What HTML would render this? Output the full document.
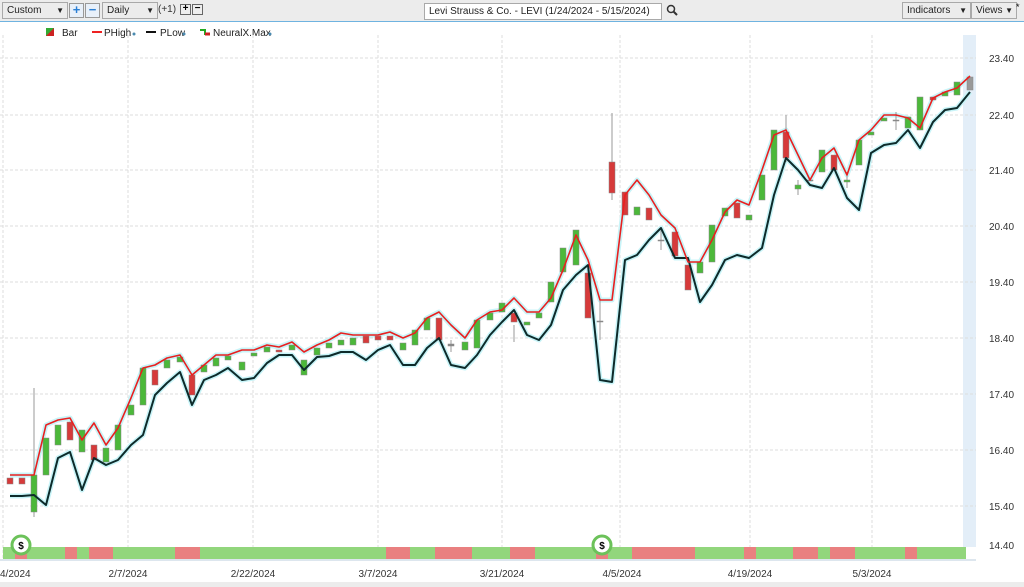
<!DOCTYPE html>
<html><head><meta charset="utf-8"><style>
body{margin:0;width:1024px;height:587px;overflow:hidden;background:#fff;font-family:"Liberation Sans",sans-serif;}
.tb{position:absolute;left:0;top:0;width:1024px;height:21px;background:#ececec;border-bottom:1px solid #6fb3e0;}
.sel{position:absolute;top:2px;height:15px;border:1px solid #a9a9a9;background:#ececec;font-size:10px;line-height:15px;padding-left:4px;box-sizing:content-box;color:#222;white-space:nowrap;overflow:hidden}
.sel b{position:absolute;right:3px;top:0;font-size:8px;}
.btn{position:absolute;top:3px;width:13px;height:13px;border:1px solid #999;background:#e8f0fa;font-size:13px;line-height:12px;text-align:center;color:#2a7fd4;font-weight:bold}
.sb{position:absolute;top:4px;width:9px;height:9px;border:1px solid #666;background:#eee;font-size:10px;line-height:8px;text-align:center;font-weight:bold}
</style></head><body>
<div class="tb">
<div class="sel" style="left:2px;width:60px">Custom<b>▼</b></div>
<div class="btn" style="left:69px">+</div>
<div class="btn" style="left:85px">−</div>
<div class="sel" style="left:102px;width:50px">Daily<b>▼</b></div>
<div style="position:absolute;left:158px;top:4px;font-size:10px;color:#333">(+1)</div>
<div class="sb" style="left:180px">+</div>
<div class="sb" style="left:192px">−</div>
<div class="sel" style="left:424px;width:232px;background:#fff;top:3px;color:#222">Levi Strauss &amp; Co. - LEVI (1/24/2024 - 5/15/2024)</div>
<svg style="position:absolute;left:666px;top:4px" width="12" height="12"><circle cx="5" cy="5" r="3.5" fill="none" stroke="#333" stroke-width="1.5"/><line x1="7.5" y1="7.5" x2="11" y2="11" stroke="#333" stroke-width="2"/></svg>
<div class="sel" style="left:902px;width:63px">Indicators<b>▼</b></div>
<div class="sel" style="left:971px;width:40px">Views<b>▼</b></div>
<div style="position:absolute;left:1016px;top:2px;font-size:9px">*</div>
</div>
<svg width="1024" height="587" style="position:absolute;left:0;top:0" xmlns="http://www.w3.org/2000/svg" font-family="Liberation Sans, sans-serif">
<g font-size="10" fill="#222">
<rect x="46" y="28" width="8" height="8" fill="#c22"/><polygon points="46,28 54,28 46,36" fill="#3a3"/>
<text x="62" y="36">Bar</text>
<line x1="92" y1="32" x2="102" y2="32" stroke="#e22" stroke-width="2"/><text x="104" y="36">PHigh</text><circle cx="134" cy="34" r="1.5" fill="#4a8ab0"/>
<line x1="146" y1="32" x2="156" y2="32" stroke="#111" stroke-width="2"/><text x="160" y="36">PLow</text><circle cx="184" cy="34" r="1.5" fill="#4a8ab0"/>
<polyline points="200,30 205,30 205,34 210,34" stroke="#2a2" stroke-width="2" fill="none"/><line x1="205" y1="34" x2="210" y2="34" stroke="#c22" stroke-width="3"/>
<text x="213" y="36">NeuralX.Max</text><circle cx="270" cy="34" r="1.5" fill="#4a8ab0"/>
</g>
<rect x="963" y="35" width="13" height="512" fill="#e3eef8"/>
<g stroke="#ddd" stroke-dasharray="3,2" stroke-width="1">
<line x1="0" y1="58" x2="976" y2="58"/><line x1="0" y1="115" x2="976" y2="115"/><line x1="0" y1="170" x2="976" y2="170"/><line x1="0" y1="226" x2="976" y2="226"/><line x1="0" y1="282" x2="976" y2="282"/><line x1="0" y1="338" x2="976" y2="338"/><line x1="0" y1="394" x2="976" y2="394"/><line x1="0" y1="450" x2="976" y2="450"/><line x1="0" y1="506" x2="976" y2="506"/>
<line x1="3" y1="35" x2="3" y2="560"/><line x1="128" y1="35" x2="128" y2="560"/><line x1="253" y1="35" x2="253" y2="560"/><line x1="378" y1="35" x2="378" y2="560"/><line x1="502" y1="35" x2="502" y2="560"/><line x1="620" y1="35" x2="620" y2="560"/><line x1="750" y1="35" x2="750" y2="560"/><line x1="872" y1="35" x2="872" y2="560"/>
</g>
<g font-size="10" fill="#333">
<text x="989" y="62">23.40</text><text x="989" y="119">22.40</text><text x="989" y="174">21.40</text><text x="989" y="230">20.40</text><text x="989" y="286">19.40</text><text x="989" y="342">18.40</text><text x="989" y="398">17.40</text><text x="989" y="454">16.40</text><text x="989" y="510">15.40</text><text x="989" y="549">14.40</text>
</g>
<rect x="3" y="547" width="963" height="12" fill="#92d67c"/>
<g fill="#e98080">
<rect x="15" y="547" width="12" height="12"/><rect x="65" y="547" width="12" height="12"/><rect x="89" y="547" width="24" height="12"/><rect x="175" y="547" width="25" height="12"/><rect x="386" y="547" width="24" height="12"/><rect x="435" y="547" width="37" height="12"/><rect x="510" y="547" width="25" height="12"/><rect x="596" y="547" width="12" height="12"/><rect x="632" y="547" width="63" height="12"/><rect x="744" y="547" width="12" height="12"/><rect x="793" y="547" width="25" height="12"/><rect x="830" y="547" width="25" height="12"/><rect x="905" y="547" width="12" height="12"/>
</g>
<g><circle cx="21" cy="545" r="9" fill="#fff" stroke="#6cc25a" stroke-width="3"/><text x="21" y="549" font-size="10" text-anchor="middle" font-weight="bold">$</text>
<circle cx="602" cy="545" r="9" fill="#fff" stroke="#6cc25a" stroke-width="3"/><text x="602" y="549" font-size="10" text-anchor="middle" font-weight="bold">$</text></g>
<line x1="0" y1="560" x2="976" y2="560" stroke="#bcd" stroke-width="1"/>
<g font-size="10" fill="#333">
<text x="0" y="577">4/2024</text><text x="128" y="577" text-anchor="middle">2/7/2024</text><text x="253" y="577" text-anchor="middle">2/22/2024</text><text x="378" y="577" text-anchor="middle">3/7/2024</text><text x="502" y="577" text-anchor="middle">3/21/2024</text><text x="622" y="577" text-anchor="middle">4/5/2024</text><text x="750" y="577" text-anchor="middle">4/19/2024</text><text x="872" y="577" text-anchor="middle">5/3/2024</text>
</g>
<rect x="0" y="582" width="1024" height="5" fill="#ececec"/>
<g fill="none" stroke-linejoin="round">
<polyline stroke="#c8f4f8" stroke-width="5" points="10,496 22,496 34,495 46,505 58,458 70,452 82,490 94,458 106,465 118,460 131,445 143,435 155,395 167,383 180,372 192,405 204,380 216,375 228,368 242,380 254,378 267,363 279,355 292,355 304,370 317,357 329,356 341,352 353,352 366,360 378,350 390,345 403,365 415,365 427,348 439,338 451,365 465,368 477,355 490,335 502,322 514,310 527,335 539,340 551,325 563,290 576,275 588,265 600,380 612,382 625,260 637,255 649,240 661,228 675,258 688,258 700,302 712,285 725,260 737,255 749,258 762,248 774,195 786,158 798,170 810,185 822,188 834,168 847,198 859,210 871,153 884,145 896,143 908,130 920,148 933,122 945,110 957,108 970,92"/>
<polyline stroke="#c8f4f8" stroke-width="5" points="10,475 22,475 34,475 46,425 58,420 70,418 82,440 94,423 106,445 118,428 131,398 143,368 155,365 167,358 180,355 192,375 204,365 216,355 228,355 242,350 254,350 267,345 279,347 292,342 304,352 317,345 329,340 341,333 353,335 366,335 378,335 390,332 403,338 415,333 427,318 439,312 451,325 465,338 477,320 490,312 502,310 514,298 527,312 539,312 551,298 563,270 576,235 588,260 600,300 612,300 625,195 637,180 649,195 661,215 675,228 688,262 700,262 712,240 725,212 737,200 749,205 762,170 774,135 786,130 798,155 810,180 822,158 834,148 847,175 859,140 871,130 884,115 896,115 908,118 920,128 933,98 945,92 957,88 970,76"/>
</g>
<g stroke="#999" stroke-width="1">
<line x1="34" y1="388" x2="34" y2="517"/><line x1="612" y1="113" x2="612" y2="200"/><line x1="786" y1="115" x2="786" y2="162"/><line x1="600" y1="300" x2="600" y2="340"/><line x1="661" y1="228" x2="661" y2="250"/><line x1="798" y1="180" x2="798" y2="195"/><line x1="847" y1="172" x2="847" y2="188"/><line x1="896" y1="112" x2="896" y2="130"/><line x1="451" y1="340" x2="451" y2="352"/><line x1="514" y1="325" x2="514" y2="342"/>
</g>
<g stroke="#888" stroke-width="0.5">
<rect x="7" y="478" width="6" height="6" fill="#d63a3a"/><rect x="19" y="478" width="6" height="6" fill="#d63a3a"/><rect x="31" y="475" width="6" height="37" fill="#4cb83a"/><rect x="43" y="438" width="6" height="37" fill="#4cb83a"/><rect x="55" y="425" width="6" height="20" fill="#4cb83a"/><rect x="67" y="422" width="6" height="18" fill="#d63a3a"/><rect x="79" y="430" width="6" height="22" fill="#4cb83a"/><rect x="91" y="445" width="6" height="15" fill="#d63a3a"/><rect x="103" y="448" width="6" height="14" fill="#4cb83a"/><rect x="115" y="425" width="6" height="25" fill="#4cb83a"/>
<rect x="128" y="405" width="6" height="10" fill="#4cb83a"/><rect x="140" y="368" width="6" height="37" fill="#4cb83a"/><rect x="152" y="370" width="6" height="15" fill="#d63a3a"/><rect x="164" y="360" width="6" height="8" fill="#4cb83a"/><rect x="177" y="357" width="6" height="5" fill="#4cb83a"/><rect x="189" y="375" width="6" height="20" fill="#d63a3a"/><rect x="201" y="365" width="6" height="7" fill="#4cb83a"/><rect x="213" y="358" width="6" height="8" fill="#4cb83a"/><rect x="225" y="356" width="6" height="4" fill="#4cb83a"/><rect x="239" y="362" width="6" height="8" fill="#4cb83a"/>
<rect x="251" y="353" width="6" height="3" fill="#4cb83a"/><rect x="264" y="347" width="6" height="5" fill="#4cb83a"/><rect x="276" y="350" width="6" height="2" fill="#d63a3a"/><rect x="289" y="345" width="6" height="5" fill="#4cb83a"/><rect x="301" y="360" width="6" height="15" fill="#4cb83a"/><rect x="314" y="348" width="6" height="7" fill="#4cb83a"/><rect x="326" y="343" width="6" height="5" fill="#4cb83a"/><rect x="338" y="340" width="6" height="5" fill="#4cb83a"/><rect x="350" y="338" width="6" height="7" fill="#4cb83a"/><rect x="363" y="336" width="6" height="7" fill="#d63a3a"/>
<rect x="375" y="336" width="6" height="4" fill="#d63a3a"/><rect x="387" y="336" width="6" height="4" fill="#d63a3a"/><rect x="400" y="343" width="6" height="7" fill="#4cb83a"/><rect x="412" y="330" width="6" height="15" fill="#4cb83a"/><rect x="424" y="318" width="6" height="12" fill="#4cb83a"/><rect x="436" y="318" width="6" height="22" fill="#d63a3a"/><rect x="448" y="344" width="6" height="2" fill="#888"/><rect x="462" y="342" width="6" height="8" fill="#4cb83a"/><rect x="474" y="320" width="6" height="28" fill="#4cb83a"/><rect x="487" y="313" width="6" height="7" fill="#4cb83a"/>
<rect x="499" y="303" width="6" height="9" fill="#4cb83a"/><rect x="511" y="313" width="6" height="9" fill="#d63a3a"/><rect x="524" y="322" width="6" height="3" fill="#4cb83a"/><rect x="536" y="313" width="6" height="5" fill="#4cb83a"/><rect x="548" y="282" width="6" height="20" fill="#4cb83a"/><rect x="560" y="248" width="6" height="24" fill="#4cb83a"/><rect x="573" y="230" width="6" height="35" fill="#4cb83a"/><rect x="585" y="273" width="6" height="45" fill="#d63a3a"/><rect x="597" y="321" width="6" height="1" fill="#888"/><rect x="609" y="162" width="6" height="31" fill="#d63a3a"/>
<rect x="622" y="192" width="6" height="23" fill="#d63a3a"/><rect x="634" y="207" width="6" height="8" fill="#4cb83a"/><rect x="646" y="208" width="6" height="12" fill="#d63a3a"/><rect x="658" y="240" width="6" height="1" fill="#888"/><rect x="672" y="232" width="6" height="24" fill="#d63a3a"/><rect x="685" y="265" width="6" height="25" fill="#d63a3a"/><rect x="697" y="262" width="6" height="11" fill="#4cb83a"/><rect x="709" y="225" width="6" height="37" fill="#4cb83a"/><rect x="722" y="208" width="6" height="8" fill="#4cb83a"/><rect x="734" y="203" width="6" height="15" fill="#d63a3a"/>
<rect x="746" y="215" width="6" height="5" fill="#4cb83a"/><rect x="759" y="175" width="6" height="25" fill="#4cb83a"/><rect x="771" y="130" width="6" height="40" fill="#4cb83a"/><rect x="783" y="132" width="6" height="26" fill="#d63a3a"/><rect x="795" y="185" width="6" height="4" fill="#4cb83a"/><rect x="807" y="180" width="6" height="1" fill="#888"/><rect x="819" y="150" width="6" height="22" fill="#4cb83a"/><rect x="831" y="155" width="6" height="15" fill="#d63a3a"/><rect x="844" y="180" width="6" height="2" fill="#4cb83a"/><rect x="856" y="140" width="6" height="25" fill="#4cb83a"/>
<rect x="868" y="132" width="6" height="3" fill="#4cb83a"/><rect x="881" y="118" width="6" height="3" fill="#4cb83a"/><rect x="893" y="120" width="6" height="1" fill="#888"/><rect x="905" y="117" width="6" height="11" fill="#4cb83a"/><rect x="917" y="97" width="6" height="33" fill="#4cb83a"/><rect x="930" y="97" width="6" height="3" fill="#d63a3a"/><rect x="942" y="92" width="6" height="4" fill="#4cb83a"/><rect x="954" y="82" width="6" height="13" fill="#4cb83a"/><rect x="967" y="77" width="6" height="13" fill="#999"/>
</g>
<g fill="none" stroke-linejoin="round">
<polyline stroke="#0d2b2b" stroke-width="2" points="10,496 22,496 34,495 46,505 58,458 70,452 82,490 94,458 106,465 118,460 131,445 143,435 155,395 167,383 180,372 192,405 204,380 216,375 228,368 242,380 254,378 267,363 279,355 292,355 304,370 317,357 329,356 341,352 353,352 366,360 378,350 390,345 403,365 415,365 427,348 439,338 451,365 465,368 477,355 490,335 502,322 514,310 527,335 539,340 551,325 563,290 576,275 588,265 600,380 612,382 625,260 637,255 649,240 661,228 675,258 688,258 700,302 712,285 725,260 737,255 749,258 762,248 774,195 786,158 798,170 810,185 822,188 834,168 847,198 859,210 871,153 884,145 896,143 908,130 920,148 933,122 945,110 957,108 970,92"/>
<polyline stroke="#e82020" stroke-width="1.6" points="10,475 22,475 34,475 46,425 58,420 70,418 82,440 94,423 106,445 118,428 131,398 143,368 155,365 167,358 180,355 192,375 204,365 216,355 228,355 242,350 254,350 267,345 279,347 292,342 304,352 317,345 329,340 341,333 353,335 366,335 378,335 390,332 403,338 415,333 427,318 439,312 451,325 465,338 477,320 490,312 502,310 514,298 527,312 539,312 551,298 563,270 576,235 588,260 600,300 612,300 625,195 637,180 649,195 661,215 675,228 688,262 700,262 712,240 725,212 737,200 749,205 762,170 774,135 786,130 798,155 810,180 822,158 834,148 847,175 859,140 871,130 884,115 896,115 908,118 920,128 933,98 945,92 957,88 970,76"/>
</g>
</svg>
</body></html>
